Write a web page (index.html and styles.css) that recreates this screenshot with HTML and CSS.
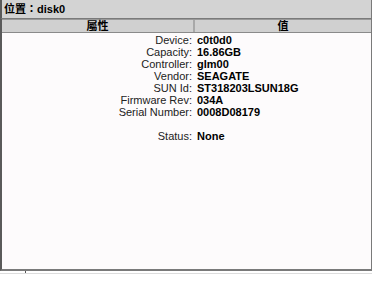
FILE: index.html
```html
<!DOCTYPE html>
<html lang="zh-Hant">
  <head>
    <meta charset="UTF-8" />
    <title>位置：disk0</title>
    <link rel="stylesheet" href="styles.css">
  </head>
  <body>
    <div class="panel">
      <div class="title-bar">位置：disk0</div>
      <div class="table">
        <div class="table-head">
          <div class="head-cell head-left">屬性</div>
          <div class="head-cell">值</div>
        </div>
        <div class="table-body">
          <div class="props">
            <span class="label">Device:</span><span class="value">c0t0d0</span>
            <span class="label">Capacity:</span><span class="value">16.86GB</span>
            <span class="label">Controller:</span><span class="value">glm00</span>
            <span class="label">Vendor:</span><span class="value">SEAGATE</span>
            <span class="label">SUN Id:</span><span class="value">ST318203LSUN18G</span>
            <span class="label">Firmware Rev:</span><span class="value">034A</span>
            <span class="label">Serial Number:</span><span class="value">0008D08179</span>
            <span class="label gap">&nbsp;</span><span class="value gap">&nbsp;</span>
            <span class="label">Status:</span><span class="value">None</span>
          </div>
        </div>
      </div>
      <div class="status-strip"><span class="tick"></span></div>
    </div>
  </body>
</html>
```

FILE: styles.css
```css
* {
  margin: 0;
  padding: 0;
  box-sizing: border-box;
}

body {
  background: #fff;
  font-family: "Liberation Sans", Arial, "Noto Sans CJK TC", sans-serif;
  font-size: 11px;
  color: #000;
}

.panel {
  width: 372px;
  display: flex;
  flex-direction: column;
}

.title-bar {
  height: 19px;
  background: #d3d3d3;
  border-left: 2px solid #5a5a5a;
  border-right: 1px solid #7a7a7a;
  border-bottom: 1px solid #7a7a7a;
  padding-left: 2px;
  font-weight: bold;
  line-height: 18px;
}

.table {
  display: flex;
  flex-direction: column;
  border-left: 2px solid #5a5a5a;
  border-right: 1px solid #7a7a7a;
  border-bottom: 2px solid #7a7a7a;
  height: 252px;
}

.table-head {
  display: flex;
  height: 14px;
  border-top: 1px solid #999;
  border-bottom: 1px solid #8a8a8a;
  background: #d0d0d0;
}

.head-cell {
  flex: 1;
  text-align: center;
  line-height: 12px;
  font-size: 11px;
  font-weight: bold;
}

.head-left {
  flex: 0 0 193px;
  border-right: 2px solid #a8a8a8;
}

.table-body {
  flex: 1;
  background: #fdfbfc;
  padding-top: 1px;
}

.props {
  display: grid;
  grid-template-columns: 190px 1fr;
  column-gap: 5px;
  line-height: 12px;
}

.label {
  text-align: right;
  color: #222;
}

.value {
  font-weight: bold;
}

.status-strip {
  position: relative;
  height: 3px;
  border-bottom: 1px solid #ddd;
}

.tick {
  position: absolute;
  left: 25px;
  top: 0;
  width: 1px;
  height: 2px;
  background: #555;
}
```
